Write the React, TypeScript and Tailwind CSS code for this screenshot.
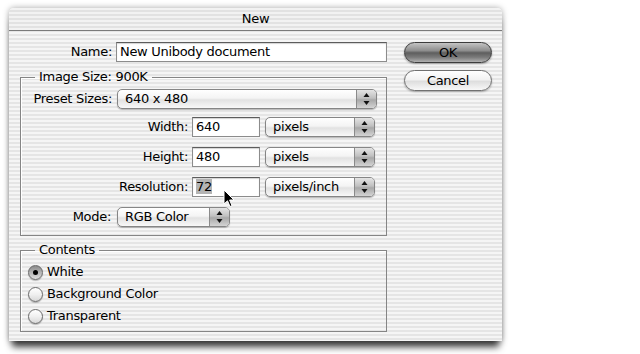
const Arrows = () => (
  <svg width="7" height="14" viewBox="0 0 7 14">
    <path d="M3.5 1 L6.5 5 L0.5 5 Z" fill="#111" />
    <path d="M0.5 9 L6.5 9 L3.5 13 Z" fill="#111" />
  </svg>
);

const Popup = ({ label, w }: { label: string; w: string }) => (
  <div
    className={`${w} flex h-[20px] rounded-[5px] border border-[#858585] bg-[linear-gradient(180deg,#ffffff_0%,#f4f4f4_45%,#e2e2e2_55%,#f8f8f8_100%)] shadow-[0_1px_1px_rgba(0,0,0,0.25)]`}
  >
    <span className="flex-1 pl-[7px] leading-[18px]">{label}</span>
    <span className="flex w-[20px] items-center justify-center rounded-r-[4px] border-l border-[#8a8a8a] bg-[linear-gradient(180deg,#e4e4e4_0%,#c0c0c0_45%,#a8a8a8_55%,#d4d4d4_100%)]">
      <Arrows />
    </span>
  </div>
);

const Field = ({ children, w }: { children: React.ReactNode; w: string }) => (
  <div
    className={`${w} relative h-[20px] border border-[#8c8c8c] border-t-[#5c5c5c] bg-white pl-[3px] leading-[18px] shadow-[inset_0_1px_1px_rgba(0,0,0,0.18)]`}
  >
    {children}
  </div>
);

const Radio = ({ on }: { on?: boolean }) => (
  <span
    className={`flex h-[15px] w-[15px] items-center justify-center rounded-full border border-[#6a6a6a] shadow-[0_1px_1px_rgba(0,0,0,0.25)] ${
      on
        ? "bg-[linear-gradient(180deg,#8a8a8a_0%,#b4b4b4_50%,#e0e0e0_100%)]"
        : "bg-[linear-gradient(180deg,#ffffff_0%,#f0f0f0_50%,#d8d8d8_100%)]"
    }`}
  >
    {on && <span className="h-[5px] w-[5px] rounded-full bg-black" />}
  </span>
);

const Cursor = () => (
  <svg className="absolute left-[30px] top-[11px]" width="13" height="20" viewBox="0 0 13 20">
    <path d="M1 1 L1 15 L4.5 11.8 L7 17.5 L9 16.6 L6.6 11 L11 11 Z" fill="#000" stroke="#fff" strokeWidth="1" />
  </svg>
);

export default function App() {
  return (
    <div className="h-[354px] w-[640px] overflow-hidden bg-white pl-[9px] pt-[8px] font-['DejaVu_Sans',sans-serif] text-[13px] tracking-[-0.3px] text-black">
      <div className="h-[333px] w-[493px] rounded-t-[5px] bg-[repeating-linear-gradient(180deg,#f5f5f5_0px,#f5f5f5_2px,#e5e5e5_2px,#e5e5e5_4px)] shadow-[0_9px_7px_-3px_rgba(0,0,0,0.75),0_0_6px_rgba(0,0,0,0.35)]">
        {/* title bar */}
        <div className="h-[23px] rounded-t-[5px] border-b border-[#7a7a7a] bg-[repeating-linear-gradient(180deg,#f2f2f2_0px,#f2f2f2_2px,#e2e2e2_2px,#e2e2e2_4px)] text-center leading-[22px]">
          New
        </div>

        <div className="flex pl-[11px] pt-[11px]">
          <div className="w-[367px]">
            <div className="flex h-[20px] items-center">
              <span className="w-[92px] text-right">Name:</span>
              <Field w="ml-[4px] w-[271px]">New Unibody document</Field>
            </div>

            <fieldset className="mt-[7px] border border-[#858585] shadow-[inset_1px_1px_0_#ffffff]">
              <legend className="ml-[14px] px-[4px] leading-[16px]">Image Size: 900K</legend>
              <div className="pb-[8px] pt-[4px]">
                <div className="flex items-center">
                  <span className="w-[91px] text-right">Preset Sizes:</span>
                  <Popup label="640 x 480" w="ml-[5px] w-[260px]" />
                </div>
                <div className="mt-[8px] flex items-center">
                  <span className="w-[167px] text-right">Width:</span>
                  <Field w="ml-[4px] w-[68px]">640</Field>
                  <Popup label="pixels" w="ml-[5px] w-[110px]" />
                </div>
                <div className="mt-[10px] flex items-center">
                  <span className="w-[167px] text-right">Height:</span>
                  <Field w="ml-[4px] w-[68px]">480</Field>
                  <Popup label="pixels" w="ml-[5px] w-[110px]" />
                </div>
                <div className="mt-[10px] flex items-center">
                  <span className="w-[167px] text-right">Resolution:</span>
                  <Field w="ml-[4px] w-[68px]">
                    <span className="bg-[#b4b4b4]">72</span>
                    <Cursor />
                  </Field>
                  <Popup label="pixels/inch" w="ml-[5px] w-[110px]" />
                </div>
                <div className="mt-[10px] flex items-center">
                  <span className="w-[90px] text-right">Mode:</span>
                  <Popup label="RGB Color" w="ml-[6px] w-[113px]" />
                </div>
              </div>
            </fieldset>

            <fieldset className="mt-[6px] border border-[#858585] shadow-[inset_1px_1px_0_#ffffff]">
              <legend className="ml-[14px] px-[4px] leading-[16px]">Contents</legend>
              <div className="pb-[4px] pl-[7px] pt-[3px]">
                <div className="flex h-[22px] items-center gap-[4px]">
                  <Radio on />
                  <span>White</span>
                </div>
                <div className="flex h-[22px] items-center gap-[4px]">
                  <Radio />
                  <span>Background Color</span>
                </div>
                <div className="flex h-[22px] items-center gap-[4px]">
                  <Radio />
                  <span>Transparent</span>
                </div>
              </div>
            </fieldset>
          </div>

          <div className="ml-[17px] flex w-[88px] flex-col gap-[7px]">
            <button className="h-[21px] rounded-full border border-[#3c3c3c] bg-[linear-gradient(180deg,#c4c4c4_0%,#8e8e8e_40%,#5e5e5e_52%,#7a7a7a_75%,#b0b0b0_100%)] leading-[19px] shadow-[0_1px_2px_rgba(0,0,0,0.35)]">
              OK
            </button>
            <button className="h-[21px] rounded-full border border-[#707070] bg-[linear-gradient(180deg,#ffffff_0%,#f2f2f2_45%,#dedede_55%,#f8f8f8_100%)] leading-[19px] shadow-[0_1px_2px_rgba(0,0,0,0.3)]">
              Cancel
            </button>
          </div>
        </div>
      </div>
    </div>
  );
}
